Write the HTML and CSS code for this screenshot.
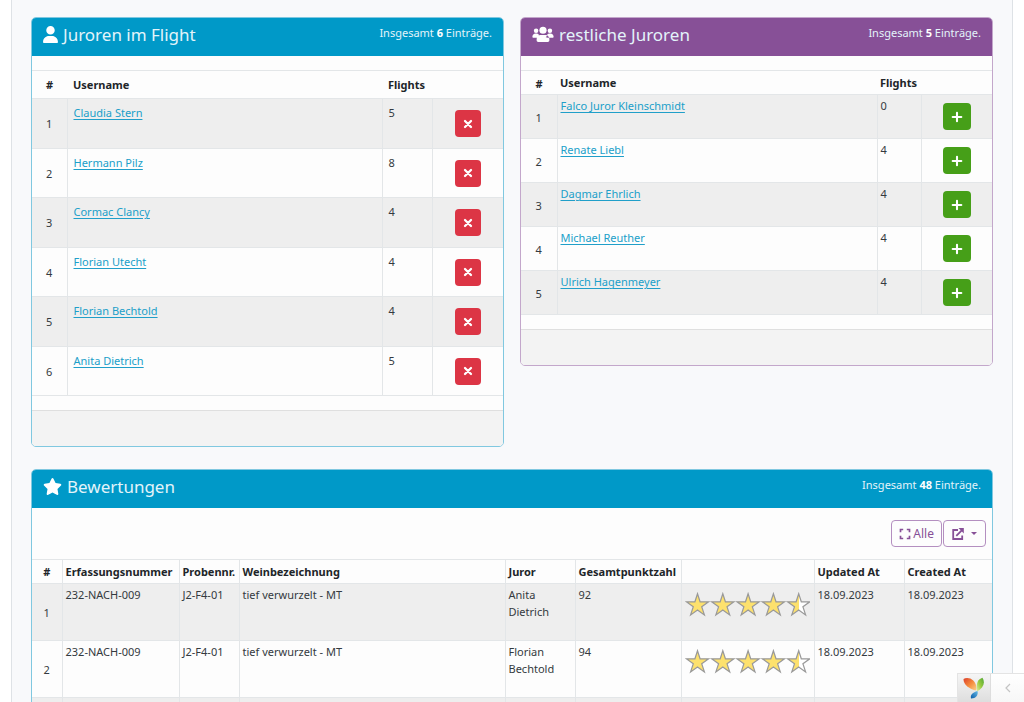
FILE: index.html
```html
<!DOCTYPE html>
<html lang="de">
<head>
<meta charset="utf-8">
<title>Juroren im Flight</title>
<link rel="stylesheet" href="styles.css">
</head>
<body>
<svg class="defs" aria-hidden="true">
  <defs>
    <symbol id="user" viewBox="0 0 448 512"><path d="M224 256a128 128 0 1 0 0-256 128 128 0 0 0 0 256zm-46 48C80 304 0 384 0 482c0 17 13 30 30 30h388c17 0 30-13 30-30 0-98-80-178-178-178z"/></symbol>
    <symbol id="users" viewBox="0 0 640 512"><circle cx="320" cy="128" r="108"/><circle cx="112" cy="144" r="68"/><circle cx="528" cy="144" r="68"/><path d="M32 352c-18 0-32-14-32-32 0-53 43-96 96-96h32c21 0 40 7 56 18 4 44 24 76 54 96-25 4-44 8-60 14zM608 352c18 0 32-14 32-32 0-53-43-96-96-96h-32c-21 0-40 7-56 18-4 44-24 76-54 96 25 4 44 8 60 14zM248 272h144c66 0 120 54 120 120v40c0 27-21 48-48 48H176c-27 0-48-21-48-48v-40c0-66 54-120 120-120z"/></symbol>
    <symbol id="star" viewBox="0 0 576 512"><path d="M317 18c-12-24-46-24-58 0l-64 132-146 22c-26 4-37 36-18 55l106 103-25 145c-4 26 24 46 47 34l129-68 129 68c23 12 51-8 47-34l-25-145 106-103c19-19 8-51-18-55l-146-22z"/></symbol>
    <symbol id="cross" viewBox="0 0 10 10"><path d="M2 2l6 6M8 2L2 8" fill="none" stroke="currentColor" stroke-width="2.300" stroke-linecap="round"/></symbol>
    <symbol id="plus" viewBox="0 0 12 12"><path d="M6 1.700v8.600M1.700 6h8.600" fill="none" stroke="currentColor" stroke-width="2.100" stroke-linecap="round"/></symbol>
    <symbol id="expand" viewBox="0 0 12 12"><path d="M1.500 4.200V1.500h2.700M7.800 1.500h2.700v2.700M10.500 7.800v2.700H7.800M4.200 10.500H1.500V7.800" fill="none" stroke="currentColor" stroke-width="1.700"/></symbol>
    <symbol id="export" viewBox="0 0 12 12"><path d="M6 2H1.200v9h9V7.500M4.300 7.800L10 2.100" fill="none" stroke="currentColor" stroke-width="1.800"/><path d="M6.500 .1h5.300v5.300z"/></symbol>
    <symbol id="chevron" viewBox="0 0 6 10"><path d="M5 1L1 5l4 4" fill="none" stroke="currentColor" stroke-width="1.200"/></symbol>
    <linearGradient id="half"><stop offset=".5" stop-color="#fde16d"/><stop offset=".5" stop-color="#fff"/></linearGradient>
    <symbol id="rating" viewBox="0 0 125 26">
      <g stroke="#999" stroke-width="1.200" fill="#fde16d">
        <path id="s" d="M12.500 1.700l2.600 8.100h8.500l-6.900 5 2.700 8.100-6.900-5-6.900 5 2.700-8.100-6.900-5h8.500z"/>
        <use href="#s" x="25.300"/><use href="#s" x="50.600"/><use href="#s" x="75.900"/>
        <path transform="translate(101.200)" fill="url(#half)" d="M12.500 1.700l2.600 8.100h8.500l-6.900 5 2.700 8.100-6.900-5-6.900 5 2.700-8.100-6.900-5h8.500z"/>
      </g>
    </symbol>
    <linearGradient id="yr" x1="0" y1="0" x2="1" y2="1"><stop offset="0" stop-color="#dc3f2c"/><stop offset=".5" stop-color="#f58a3c"/><stop offset="1" stop-color="#fbd38b"/></linearGradient>
    <linearGradient id="yg" x1="1" y1="0" x2="0" y2="1"><stop offset="0" stop-color="#4fa637"/><stop offset=".5" stop-color="#95c93d"/><stop offset="1" stop-color="#e5ee9f"/></linearGradient>
    <linearGradient id="yb" x1="1" y1="0" x2="0" y2="1"><stop offset="0" stop-color="#65b9e6"/><stop offset="1" stop-color="#0a5ca8"/></linearGradient>
  </defs>
</svg>

<main class="page">
  <div class="columns">
    <section class="card card-info">
      <header class="card-header"><h2><svg class="i-user"><use href="#user"/></svg>Juroren im Flight</h2><span class="summary">Insgesamt <b>6</b> Einträge.</span></header>
      <table class="grid jurors roomy">
        <colgroup><col class="w-num"><col><col class="w-flights"><col class="w-action"></colgroup>
        <thead><tr><th class="num">#</th><th>Username</th><th>Flights</th><th></th></tr></thead>
        <tbody>
          <tr><td class="num">1</td><td><a href="#">Claudia Stern</a></td><td>5</td><td class="action"><button class="btn btn-danger" aria-label="Entfernen"><svg><use href="#cross"/></svg></button></td></tr>
          <tr><td class="num">2</td><td><a href="#">Hermann Pilz</a></td><td>8</td><td class="action"><button class="btn btn-danger" aria-label="Entfernen"><svg><use href="#cross"/></svg></button></td></tr>
          <tr><td class="num">3</td><td><a href="#">Cormac Clancy</a></td><td>4</td><td class="action"><button class="btn btn-danger" aria-label="Entfernen"><svg><use href="#cross"/></svg></button></td></tr>
          <tr><td class="num">4</td><td><a href="#">Florian Utecht</a></td><td>4</td><td class="action"><button class="btn btn-danger" aria-label="Entfernen"><svg><use href="#cross"/></svg></button></td></tr>
          <tr><td class="num">5</td><td><a href="#">Florian Bechtold</a></td><td>4</td><td class="action"><button class="btn btn-danger" aria-label="Entfernen"><svg><use href="#cross"/></svg></button></td></tr>
          <tr><td class="num">6</td><td><a href="#">Anita Dietrich</a></td><td>5</td><td class="action"><button class="btn btn-danger" aria-label="Entfernen"><svg><use href="#cross"/></svg></button></td></tr>
        </tbody>
      </table>
      <footer class="card-footer"></footer>
    </section>

    <section class="card card-secondary">
      <header class="card-header"><h2><svg class="i-users"><use href="#users"/></svg>restliche Juroren</h2><span class="summary">Insgesamt <b>5</b> Einträge.</span></header>
      <table class="grid jurors compact">
        <colgroup><col class="w-num"><col><col class="w-flights-sm"><col class="w-action"></colgroup>
        <thead><tr><th class="num">#</th><th>Username</th><th>Flights</th><th></th></tr></thead>
        <tbody>
          <tr><td class="num">1</td><td><a href="#">Falco Juror Kleinschmidt</a></td><td>0</td><td class="action"><button class="btn btn-success" aria-label="Hinzufügen"><svg><use href="#plus"/></svg></button></td></tr>
          <tr><td class="num">2</td><td><a href="#">Renate Liebl</a></td><td>4</td><td class="action"><button class="btn btn-success" aria-label="Hinzufügen"><svg><use href="#plus"/></svg></button></td></tr>
          <tr><td class="num">3</td><td><a href="#">Dagmar Ehrlich</a></td><td>4</td><td class="action"><button class="btn btn-success" aria-label="Hinzufügen"><svg><use href="#plus"/></svg></button></td></tr>
          <tr><td class="num">4</td><td><a href="#">Michael Reuther</a></td><td>4</td><td class="action"><button class="btn btn-success" aria-label="Hinzufügen"><svg><use href="#plus"/></svg></button></td></tr>
          <tr><td class="num">5</td><td><a href="#">Ulrich Hagenmeyer</a></td><td>4</td><td class="action"><button class="btn btn-success" aria-label="Hinzufügen"><svg><use href="#plus"/></svg></button></td></tr>
        </tbody>
      </table>
      <footer class="card-footer"></footer>
    </section>
  </div>

  <section class="card card-info">
    <header class="card-header"><h2><svg class="i-star"><use href="#star"/></svg>Bewertungen</h2><span class="summary">Insgesamt <b>48</b> Einträge.</span></header>
    <div class="toolbar">
      <button class="btn btn-outline"><svg><use href="#expand"/></svg>Alle</button>
      <button class="btn btn-outline btn-export" aria-label="Export"><svg><use href="#export"/></svg><span class="caret"></span></button>
    </div>
    <table class="grid ratings">
      <colgroup><col class="w-rank"><col class="w-entry"><col class="w-sample"><col><col class="w-juror"><col class="w-points"><col class="w-stars"><col class="w-date"><col class="w-created"></colgroup>
      <thead><tr><th class="num">#</th><th>Erfassungsnummer</th><th>Probennr.</th><th>Weinbezeichnung</th><th>Juror</th><th>Gesamtpunktzahl</th><th></th><th>Updated At</th><th>Created At</th></tr></thead>
      <tbody>
        <tr><td class="num">1</td><td>232-NACH-009</td><td>J2-F4-01</td><td>tief verwurzelt - MT</td><td>Anita Dietrich</td><td>92</td><td class="stars"><svg><use href="#rating"/></svg></td><td>18.09.2023</td><td>18.09.2023</td></tr>
        <tr><td class="num">2</td><td>232-NACH-009</td><td>J2-F4-01</td><td>tief verwurzelt - MT</td><td>Florian Bechtold</td><td>94</td><td class="stars"><svg><use href="#rating"/></svg></td><td>18.09.2023</td><td>18.09.2023</td></tr>
        <tr><td></td><td></td><td></td><td></td><td></td><td></td><td></td><td></td><td></td></tr>
      </tbody>
    </table>
  </section>
</main>

<aside class="debug">
  <a class="debug-logo" href="#" aria-label="Debugger"><svg viewBox="0 0 22 22"><path fill="url(#yr)" d="M.5 2C5-.5 13 2 13.500 11.500c0 1-.3 1.500-1 2C6 11.500.5 8 .5 2z"/><path fill="url(#yg)" d="M19.500.8c3 5 1 10.200-5.500 13.700C13.500 9 13 3 19.500.8z"/><path fill="url(#yb)" d="M14.500 14c1 4-1.500 7.500-6.500 7.500-1-4 2-6 6.500-7.500z"/></svg></a>
  <button class="debug-toggle" aria-label="Öffnen"><svg><use href="#chevron"/></svg></button>
</aside>
</body>
</html>
```
FILE: styles.css
```css
* { box-sizing: border-box; }
body {
  margin: 0;
  height: 100vh;
  overflow: hidden;
  background: #fff;
  color: #343a40;
  font: 11px/17px "Noto Sans", sans-serif;
}
svg { fill: currentColor; flex: none; display: block; }
.defs { position: absolute; width: 0; height: 0; }
.page {
  margin: 0 11px;
  padding: 17px 19px 0;
  min-height: 100vh;
  background: #f8f9fb;
  border: solid #dee2e6;
  border-width: 0 1px;
}
.columns {
  display: grid;
  grid-template-columns: 1fr 1fr;
  align-items: start;
  gap: 16px;
  margin-bottom: 22px;
}
.card {
  --accent: #0099c8;
  --edge: #80c8e0;
  background: #fdfdfd;
  border: 1px solid var(--edge);
  border-radius: 5px;
  overflow: hidden;
}
.card-secondary { --accent: #875097; --edge: #c3a7cb; }
.card-header {
  display: flex;
  justify-content: space-between;
  height: 39px;
  margin: -1px -1px 14px;
  padding: 5px 12px 0;
  background: var(--accent);
  color: #e3f4fa;
}
.card-header h2 {
  display: flex;
  align-items: center;
  gap: 5px;
  margin: 0;
  height: 25px;
  font-size: 17px;
  font-weight: 400;
}
.card-header h2 svg { color: #fff; }
.summary { padding-top: 2px; }
.summary b { color: #fff; }
.i-user { width: 15px; height: 17px; }
.i-users { width: 22px; height: 17px; }
.i-star { width: 19px; height: 17px; }

.grid { width: 100%; table-layout: fixed; border-collapse: collapse; }
.grid th, .grid td {
  padding: 2px 3px;
  text-align: left;
  vertical-align: top;
  border: 1px solid #e3e6e8;
}
.grid th { color: #212529; vertical-align: middle; white-space: nowrap; }
.grid tr > :first-child { border-left: 0; }
.grid tr > :last-child { border-right: 0; }
.grid tbody tr:nth-child(odd) { background: #eee; }
.grid .num, .grid .action { text-align: center; vertical-align: middle; }
.jurors .num { padding-top: 4px; }
.jurors th { border-left: 0; border-right: 0; }
.grid.roomy th, .grid.roomy td { padding: 5px 6px; }
.roomy .w-num { width: 35px; }
.roomy thead tr { height: 28px; }
.roomy tbody tr { height: 50px; }
.roomy tbody tr:nth-child(even) { height: 49px; }
.compact thead tr { height: 23px; }
.compact tbody tr { height: 44px; }
.ratings thead tr { height: 24px; }
.ratings tbody tr { height: 57px; }
.w-num { width: 36px; }
.w-flights { width: 50px; }
.w-flights-sm { width: 44px; }
.w-action { width: 71px; }
.w-rank { width: 30px; }
.w-entry { width: 117px; }
.w-sample { width: 60px; }
.w-juror { width: 70px; }
.w-points { width: 106px; }
.w-stars { width: 133px; }
.w-date { width: 90px; }
.w-created { width: 88px; }
.stars svg { width: 125px; height: 26px; margin-top: 6px; }
a { color: #209fc9; text-underline-offset: 2px; }

.card-footer {
  height: 36px;
  margin-top: 14px;
  background: #f3f3f3;
  border-top: 1px solid #dfdfdf;
}

.btn {
  display: inline-flex;
  align-items: center;
  justify-content: center;
  height: 27px;
  padding: 0 8px;
  border: 0;
  border-radius: 4px;
  color: #fff;
  font: inherit;
  vertical-align: middle;
}
.btn-danger { background: #dc3545; }
.btn-danger svg { width: 10px; height: 10px; }
.btn-success { background: #469f18; }
.btn-success svg { width: 12px; height: 12px; }
.toolbar { display: flex; justify-content: flex-end; gap: 1px; padding: 0 6px 12px; margin-top: -2px; }
.btn.btn-outline {
  gap: 2px;
  padding: 0 7px;
  font-size: 12px;
  background: transparent;
  color: #875097;
  border: 1px solid #b48fc0;
}
.btn-outline svg { width: 12px; height: 12px; }
.btn.btn-export { gap: 7px; padding: 0 8px; }
.caret { border: 3px solid transparent; border-top-color: currentColor; border-bottom: 0; }

.debug {
  position: fixed;
  right: 0;
  bottom: 0;
  display: flex;
  height: 29px;
  border-top: 1px solid #e4e4e4;
  border-left: 1px solid #e4e4e4;
  background: #fbfbfb;
}
.debug-logo {
  display: grid;
  place-items: center;
  width: 33px;
  background: linear-gradient(#f5f5f5, #dedede);
  border-right: 1px solid #ddd;
}
.debug-logo svg { width: 22px; height: 22px; }
.debug-toggle {
  display: grid;
  place-items: center;
  width: 33px;
  border: 0;
  background: linear-gradient(#fff, #f7f7f7);
  color: #c4c4c4;
}
.debug-toggle svg { width: 6px; height: 10px; }
```
